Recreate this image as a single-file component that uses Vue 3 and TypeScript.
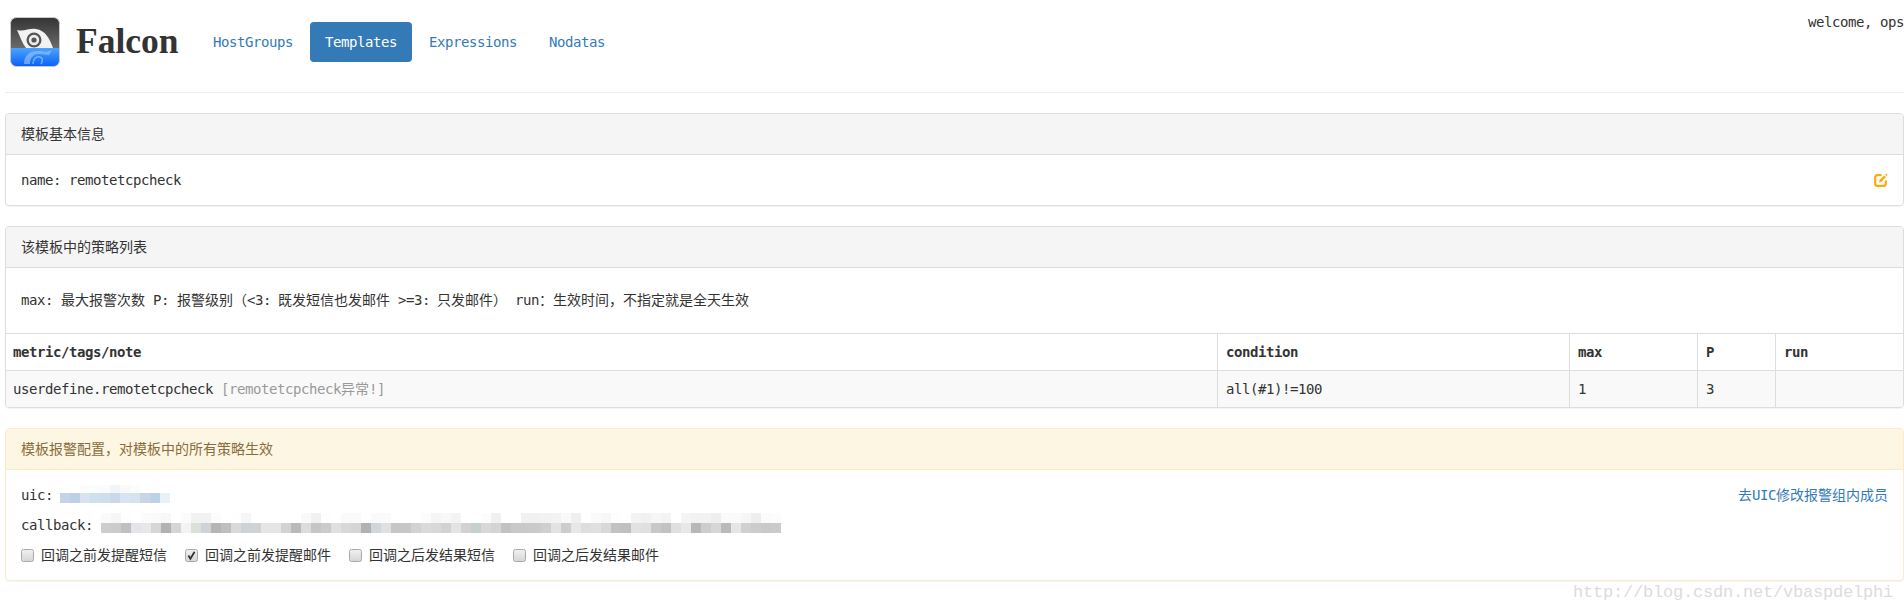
<script setup lang="ts">
const hex = (v: string) => (v.length === 2 ? `#${v}${v}${v}` : `#${v}`)

const uicLight = ['ffffff', 'ffffff', 'fcfcfd', 'fbfcfd', 'fafbfd', 'eff5fa', 'f8f9fa', 'fbfcfd', 'ffffff', 'ffffff', 'ffffff']
const uicDark = ['c4d4e6', 'bdd1e6', 'd8e3ef', 'cedfee', 'cfdeec', 'cad9e8', 'd8e4f0', 'd6e2ee', 'c9d5e6', 'bcd2e6', 'e8f0f8']

const cbLight = 'fa f6 fe ff fb fa f8 ff fb f2 f2 fc ff fe f6 ff ff ff ff ff f9 f1 fe ff fa fa ff fa fa ff ff ff fc f5 f8 f3 ff ff fc f0 ff ff f1 f1 f2 f3 f9 ef ff fa f7 fd fe f3 f1 f6 f3 ff f4 f2 f2 ee fa fa f6 ee fb fc'.split(' ')
const cbDark = 'cd cb c0 e2e6ea e8 d6 b2 d0d6da f3 dde0da cfd2d6 b5 bebfbe d7dad5 ced2d5 d0d3d3 e6 e4 d2 ba dc c6 cb dde1e2 d8 d5 b2 d0d6da e0 c6 c7 cdd3d6 dcdad8 d8 d2 e0e4e5 d2 c8cfd1 d8 d4 c2 c8 c9 ca cf e3 cd e7 de e0 d8 c2 c0 e2 e0 c8 c2 e0 e8 b8 cd d6 ba e6 d0 cc c9 cb'.split(' ')

const uicCells = [...uicLight, ...uicDark].map(hex)
const cbCells = [...cbLight, ...cbDark].map(hex)

const options = [
  { label: '回调之前发提醒短信', checked: false },
  { label: '回调之前发提醒邮件', checked: true },
  { label: '回调之后发结果短信', checked: false },
  { label: '回调之后发结果邮件', checked: false },
]
</script>

<template>
  <div class="page">
    <header class="top">
      <svg class="logo" viewBox="0 0 50 50" width="50" height="50" aria-label="Falcon logo">
        <defs>
          <linearGradient id="lgTop" x1="0" y1="0" x2="0" y2="1">
            <stop offset="0" stop-color="#333" />
            <stop offset="1" stop-color="#6a6a6a" />
          </linearGradient>
          <linearGradient id="lgBottom" x1="0" y1="0" x2="0" y2="1">
            <stop offset="0" stop-color="#4aa3ff" />
            <stop offset="1" stop-color="#0a5ff5" />
          </linearGradient>
          <clipPath id="lgClip"><rect x="0.5" y="0.5" width="49" height="49" rx="6" /></clipPath>
        </defs>
        <g clip-path="url(#lgClip)">
          <rect width="50" height="31" fill="url(#lgTop)" />
          <rect y="31" width="50" height="19" fill="url(#lgBottom)" />
          <path d="M7 13C14 15 19 11 26 12C35 13 40 22 43 31L16 31C12 26 10 19 7 13Z" fill="#f2f2f2" />
          <circle cx="24" cy="23" r="7.5" fill="#555" />
          <circle cx="24" cy="23" r="5.2" fill="#eee" />
          <circle cx="24" cy="23" r="2.6" fill="#555" />
          <path d="M14 47C14 38 20 34 27 34C33 34 37 36 42 33L39 38C35 38 33 37 29 37C24 37 20 40 20 47Z" fill="#a8d0ff" opacity=".55" />
          <path d="M23 47C23 42 26 39 30 40C33 41 33 44 31 47" fill="none" stroke="#a8d0ff" stroke-width="1.6" opacity=".6" />
        </g>
        <rect x="0.5" y="0.5" width="49" height="49" rx="6" fill="none" stroke="#c9c9c9" />
      </svg>
      <h1 class="brand">Falcon</h1>
      <nav class="nav">
        <a class="pill">HostGroups</a>
        <a class="pill active">Templates</a>
        <a class="pill">Expressions</a>
        <a class="pill">Nodatas</a>
      </nav>
      <div class="welcome">welcome, ops</div>
    </header>

    <section class="panel">
      <div class="heading">模板基本信息</div>
      <div class="body row">
        <span>name: remotetcpcheck</span>
        <svg class="edit" viewBox="0 0 14 14" width="14" height="14" aria-label="edit">
          <path d="M7.5 2.2H3.6A2.4 2.4 0 0 0 1.2 4.6V10.4A2.4 2.4 0 0 0 3.6 12.8H9.4A2.4 2.4 0 0 0 11.8 10.4V7.5" fill="none" stroke="#fba90d" stroke-width="2.2" />
          <path d="M5 9.4L5.5 7L10.2 2.4L12 4.1L7.3 8.9Z" fill="#fba90d" />
          <path d="M11.2 1.4L12.2 .5L13.7 2L12.8 3Z" fill="#fba90d" />
        </svg>
      </div>
    </section>

    <section class="panel">
      <div class="heading">该模板中的策略列表</div>
      <div class="legend">max: <span class="zh">最大报警次数</span> P: <span class="zh">报警级别（</span>&lt;3: <span class="zh nudge">既发短信也发邮件</span> &gt;=3: <span class="zh nudge">只发邮件）</span> run<span class="zh">：生效时间，不指定就是全天生效</span></div>
      <table class="grid">
        <colgroup>
          <col class="c1" />
          <col class="c2" />
          <col class="c3" />
          <col class="c4" />
          <col />
        </colgroup>
        <thead>
          <tr>
            <th>metric/tags/note</th>
            <th>condition</th>
            <th>max</th>
            <th>P</th>
            <th>run</th>
          </tr>
        </thead>
        <tbody>
          <tr>
            <td>userdefine.remotetcpcheck <span class="note">[remotetcpcheck<span class="zh">异常</span>!]</span></td>
            <td>all(#1)!=100</td>
            <td>1</td>
            <td>3</td>
            <td></td>
          </tr>
        </tbody>
      </table>
    </section>

    <section class="panel warn">
      <div class="heading">模板报警配置，对模板中的所有策略生效</div>
      <div class="body stack">
        <div class="row">
          <div class="line">
            <span>uic:&nbsp;</span>
            <div class="mosaic m-uic">
              <i v-for="(c, i) in uicCells" :key="i" :style="{ background: c }"></i>
            </div>
          </div>
          <a class="link"><span class="zh">去</span>UIC<span class="zh">修改报警组内成员</span></a>
        </div>
        <div class="line">
          <span>callback:&nbsp;</span>
          <div class="mosaic m-cb">
            <i v-for="(c, i) in cbCells" :key="i" :style="{ background: c }"></i>
          </div>
        </div>
        <div class="checks">
          <label v-for="o in options" :key="o.label" class="check">
            <span class="box" :class="{ on: o.checked }">
              <svg v-if="o.checked" viewBox="0 0 13 13" width="13" height="13">
                <path d="M3.4 6.6L5.4 9.8L9.6 2.8" fill="none" stroke="#333" stroke-width="1.8" />
              </svg>
            </span>
            {{ o.label }}
          </label>
        </div>
      </div>
    </section>

    <div class="mark">http://blog.csdn.net/vbaspdelphi</div>
  </div>
</template>

<style scoped>
.page {
  position: relative;
  box-sizing: border-box;
  width: 1904px;
  height: 613px;
  padding-left: 5px;
  overflow: hidden;
  background: #fff;
  color: #333;
  font: 14px/20px "DejaVu Sans Mono", "Noto Sans CJK SC", monospace;
  letter-spacing: -0.43px;
}
.zh,
.heading,
.check {
  letter-spacing: 0;
}
.nudge {
  margin-left: -1px;
}
.top {
  display: flex;
  align-items: flex-start;
  height: 92px;
  border-bottom: 1px solid #eee;
  margin-bottom: 20px;
}
.logo {
  margin: 17px 16px 0 5px;
  flex: none;
}
.brand {
  width: 102px;
  margin: 21px 20px 0 0;
  font: bold 35.5px/40px "Liberation Serif", serif;
  letter-spacing: 0;
  color: #333;
}
.nav {
  display: flex;
  gap: 2px;
  margin-top: 22px;
}
.pill {
  padding: 10px 15px;
  border-radius: 4px;
  color: #337ab7;
}
.active {
  background: #337ab7;
  color: #fff;
}
.welcome {
  margin: 12px 0 0 auto;
  white-space: nowrap;
}
.panel {
  border: 1px solid #ddd;
  border-radius: 4px;
  box-shadow: 0 1px 1px rgba(0, 0, 0, 0.05);
  margin-bottom: 20px;
  overflow: hidden;
}
.heading {
  padding: 10px 15px;
  background: #f5f5f5;
  border-bottom: 1px solid #ddd;
}
.body {
  padding: 15px;
}
.row {
  display: flex;
  justify-content: space-between;
  align-items: center;
}
.edit {
  flex: none;
}
.legend {
  padding: 22px 15px 23px;
}
.grid {
  width: 100%;
  table-layout: fixed;
  border-collapse: separate;
  border-spacing: 0;
}
.c1 { width: 1211px; }
.c2 { width: 352px; }
.c3 { width: 128px; }
.c4 { width: 78px; }
th, td {
  padding: 8px;
  text-align: left;
  border-left: 1px solid #ddd;
  border-top: 1px solid #ddd;
}
th:first-child, td:first-child {
  border-left: 0;
  padding-left: 7px;
}
th {
  font-weight: bold;
}
td {
  background: #f9f9f9;
}
.note {
  color: #999;
}
.warn {
  border-color: #faebcc;
}
.warn .heading {
  background: #fdf6e3;
  border-bottom-color: #faebcc;
  color: #8a6d3b;
}
.stack {
  display: flex;
  flex-direction: column;
  gap: 10px;
}
.line {
  display: flex;
}
.link {
  color: #337ab7;
}
.mosaic {
  display: grid;
  grid-auto-rows: 10px;
}
.mosaic i {
  display: block;
}
.m-uic {
  grid-template-columns: repeat(11, 10px);
  grid-template-rows: 8px 10px;
  margin-left: -1px;
}
.m-cb {
  grid-template-columns: repeat(68, 10px);
  margin-top: -2px;
}
.checks {
  display: flex;
  gap: 18px;
}
.check {
  display: flex;
  align-items: center;
}
.box {
  box-sizing: border-box;
  width: 13px;
  height: 13px;
  margin-right: 7px;
  border: 1px solid #a9a9a9;
  border-radius: 2.5px;
  background: linear-gradient(#f0f0f0, #d6d6d6);
  display: block;
  position: relative;
}
.box svg {
  position: absolute;
  left: -1px;
  top: -1px;
}
.mark {
  position: absolute;
  left: 1573px;
  top: 583px;
  font: 17px/20px "Liberation Mono", monospace;
  letter-spacing: -0.2px;
  color: #dcdcdc;
  white-space: nowrap;
}
</style>

<style>
html, body {
  margin: 0;
  overflow: hidden;
}
</style>
